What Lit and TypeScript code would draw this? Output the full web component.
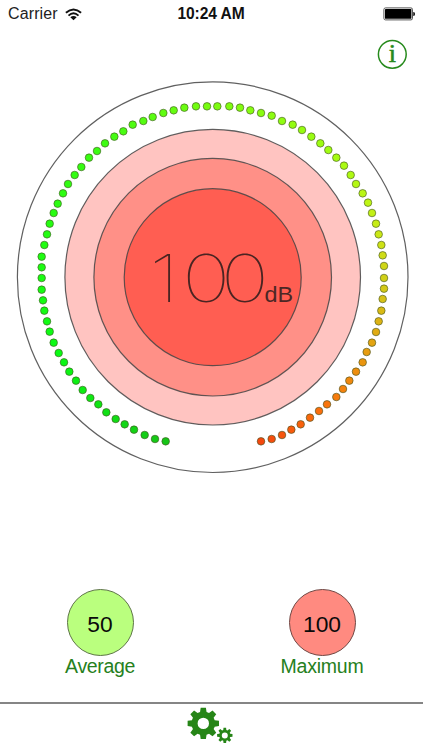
import { LitElement, css, html, svg } from "lit";
import { customElement, property } from "lit/decorators.js";

// Dial dots, clockwise from lower left, as offsets in thirds of a pixel.
const LEFT_UPPER = [[95,577],[95,545],[103,510],[111,478],[119,446],[131,414],[143,386],[159,355],[174,327],[194,300],[214,276],[237,248],[261,228],[285,205],[313,185],[340,169],[368,149],[400,138],[428,126],[460,114],[491,106],[523,98],[558,94],[591,94]];
const LEFT_LOWER = [[467,499],[435,492],[404,480],[372,464],[344,448],[317,432],[289,412],[265,388],[241,369],[218,345],[198,317],[178,290],[162,262],[146,234],[131,203],[119,170],[111,139],[103,107],[99,76],[95,44],[95,9]];
const RIGHT_UPPER = [[22,94],[58,94],[90,98],[121,106],[153,114],[185,122],[216,138],[248,149],[276,165],[304,185],[331,205],[355,225],[379,248],[402,272],[422,300],[438,327],[458,355],[474,383],[486,414],[498,446],[506,478],[514,510],[518,541],[522,573]];
const RIGHT_LOWER = [[522,9],[522,41],[518,72],[514,107],[506,139],[498,171],[486,203],[470,231],[458,262],[438,290],[418,317],[399,342],[379,366],[351,388],[327,408],[300,428],[272,448],[244,464],[216,480],[185,492],[153,499]];

const place = (list: number[][], x: number, y: number) =>
  list.map(([a, b]) => [x + a / 3, y + b / 3]);

const DOTS = [
  ...place(LEFT_LOWER, 10, 275),
  ...place(LEFT_UPPER, 10, 75),
  ...place(RIGHT_UPPER, 210, 75),
  ...place(RIGHT_LOWER, 210, 275),
];

const STOPS: [number, number[]][] = [
  [0, [22, 196, 22]],
  [8, [14, 232, 20]],
  [13, [10, 250, 20]],
  [22, [30, 252, 18]],
  [34, [62, 252, 18]],
  [45, [124, 252, 16]],
  [56, [160, 252, 18]],
  [62, [190, 245, 20]],
  [66, [206, 226, 22]],
  [69, [208, 208, 24]],
  [73, [220, 178, 20]],
  [78, [238, 142, 14]],
  [83, [250, 110, 12]],
  [89, [244, 72, 14]],
];

function dotColor(i: number): string {
  const n = Math.max(1, STOPS.findIndex(([at]) => at >= i));
  const [a, from] = STOPS[n - 1];
  const [b, to] = STOPS[n];
  const t = (i - a) / (b - a);
  return `rgb(${from.map((v, k) => Math.round(v + (to[k] - v) * t)).join(",")})`;
}

function gear(cx: number, cy: number, outer: number, root: number, hole: number): string {
  const pt = (r: number, deg: number) => {
    const a = (deg * Math.PI) / 180;
    return `${(cx + r * Math.cos(a)).toFixed(2)} ${(cy + r * Math.sin(a)).toFixed(2)}`;
  };
  let d = "";
  for (let k = 0; k < 8; k++) {
    const a = k * 45;
    d += `${k ? "L" : "M"}${pt(root, a - 16)}L${pt(outer, a - 9.5)}L${pt(outer, a + 9.5)}L${pt(root, a + 16)}A${root} ${root} 0 0 1 ${pt(root, a + 29)}`;
  }
  return `${d}ZM${cx - hole} ${cy}a${hole} ${hole} 0 1 0 ${hole * 2} 0a${hole} ${hole} 0 1 0 ${-hole * 2} 0Z`;
}

@customElement("status-bar")
export class StatusBar extends LitElement {
  static styles = css`
    :host { display: grid; grid-template-columns: 1fr auto 1fr; align-items: center; height: 28px; box-sizing: border-box; padding: 0 9px 0 8px; font-size: 16px; color: #222; }
    .left { display: flex; align-items: center; gap: 7px; }
    .carrier { letter-spacing: 0.12px; }
    .time { font-weight: bold; font-size: 15.6px; color: #111; letter-spacing: -0.1px; }
    .battery { justify-self: end; margin-right: -1px; }
    svg { display: block; }
  `;
  render() {
    return html`
      <div class="left">
        <span class="carrier">Carrier</span>
        <svg width="17" height="13" viewBox="0 0 17 13" fill="none" stroke="#111" stroke-width="1.9">
          <path d="M.9 4.8Q8.5-2 16.1 4.8M3.5 7.6Q8.5 3.1 13.5 7.6" />
          <path d="M8.5 12.2L5.3 9.2Q8.5 6.7 11.7 9.2Z" fill="#111" stroke="none" />
        </svg>
      </div>
      <span class="time">10:24 AM</span>
      <svg class="battery" width="33" height="14" viewBox="0 0 33 14">
        <rect x="1.9" y=".9" width="28.6" height="12" rx="1.6" fill="#fff" stroke="#555" />
        <rect x="3" y="2" width="26.4" height="9.8" rx=".6" fill="#000" />
        <path d="M31.2 5q2 .3 2 2t-2 2Z" fill="#222" />
      </svg>
    `;
  }
}

@customElement("level-dial")
export class LevelDial extends LitElement {
  static styles = css`
    :host { display: block; }
    svg { display: block; }
    .ring { stroke: #444; stroke-opacity: 0.85; stroke-width: 1.2; }
    .dot { stroke: #405020; stroke-opacity: 0.75; stroke-width: 0.8; }
    .value { font-family: Inter, Roboto, sans-serif; font-weight: 100; font-size: 66px; fill: #4a2422; letter-spacing: -5px; }
    .unit { font-family: "Liberation Sans", sans-serif; font-size: 22.5px; fill: #4c2725; }
  `;
  render() {
    return html`
      <svg width="423" height="400" viewBox="0 77 423 400">
        <circle class="ring" cx="212.7" cy="277.2" r="195.3" fill="#fff" />
        <circle class="ring" cx="212.7" cy="277.2" r="147.8" fill="#ffc4c1" />
        <circle class="ring" cx="212.7" cy="277.2" r="118.8" fill="#ff9087" />
        <circle class="ring" cx="212.7" cy="277.2" r="88.5" fill="#ff5e52" />
        ${DOTS.map(([x, y], i) => svg`<circle class="dot" cx=${x.toFixed(2)} cy=${y.toFixed(2)} r="3.8" fill=${dotColor(i)} />`)}
        <text class="value" transform="scale(1.24 1)" x="120.3 146.8 178.1" y="302">100</text>
        <text class="unit" x="264.4" y="302" textLength="28.6" lengthAdjust="spacingAndGlyphs">dB</text>
      </svg>
    `;
  }
}

@customElement("level-stat")
export class LevelStat extends LitElement {
  @property() value = "";
  @property() label = "";
  @property() tone = "low";
  static styles = css`
    :host { display: flex; flex-direction: column; align-items: center; }
    .disc { width: 67px; height: 67px; box-sizing: border-box; border: 1.3px solid #666; border-radius: 50%; display: grid; place-items: center; font-size: 22.8px; color: #0a0a0a; padding-top: 4px; }
    .low { background: #baff7e; border-color: #5e7548; }
    .high { background: #ff8a80; border-color: #704844; }
    .label { font-size: 19.5px; line-height: 20px; color: #268020; white-space: nowrap; letter-spacing: -0.35px; }
    .high + .label { letter-spacing: -0.2px; }
  `;
  render() {
    return html`
      <div class="disc ${this.tone}">${this.value}</div>
      <div class="label">${this.label}</div>
    `;
  }
}

@customElement("app-root")
export class AppRoot extends LitElement {
  static styles = css`
    :host { display: flex; flex-direction: column; height: 750px; overflow: hidden; background: #fff; font-family: "Liberation Sans", Arial, sans-serif; }
    .tools { display: flex; justify-content: flex-end; height: 49px; padding: 11px 15px 0 0; box-sizing: border-box; }
    .info { display: block; }
    .info-letter { font-family: "Liberation Serif", serif; font-size: 26px; fill: #268a1c; stroke: #268a1c; stroke-width: 0.6; }
    .stats { display: grid; grid-template-columns: 200px 244px; margin-top: 112px; height: 113px; }
    .tabs { flex: 1; border-top: 2px solid #858585; }
    .gears { display: block; margin-left: 183px; }
  `;
  render() {
    return html`
      <status-bar></status-bar>
      <div class="tools">
        <svg class="info" width="31" height="31" viewBox="0 0 31 31">
          <circle cx="15.3" cy="15.3" r="13.9" fill="none" stroke="#268a1c" stroke-width="1.5" />
          <text class="info-letter" x="15.3" y="23.4" text-anchor="middle">i</text>
        </svg>
      </div>
      <level-dial></level-dial>
      <div class="stats">
        <level-stat value="50" label="Average"></level-stat>
        <level-stat value="100" label="Maximum" tone="high"></level-stat>
      </div>
      <div class="tabs">
        <svg class="gears" width="56" height="44" viewBox="183 704 56 44" fill="#268517" fill-rule="evenodd">
          <path d=${gear(203.3, 723.4, 15.9, 11.8, 5.7)} />
          <path d=${gear(224.8, 735.4, 7.8, 5.6, 3)} />
        </svg>
      </div>
    `;
  }
}
